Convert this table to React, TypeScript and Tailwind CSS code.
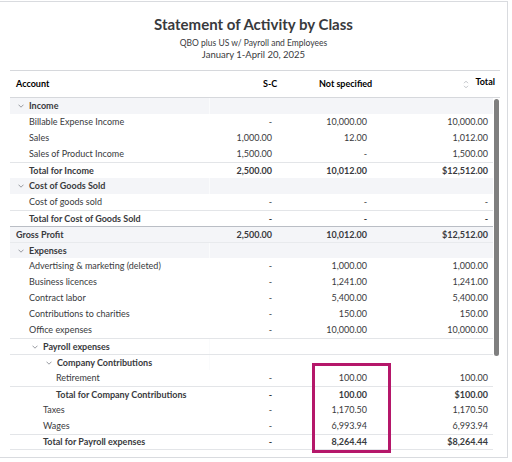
import React from "react";

type Row = {
  label: string;
  pad: string;
  kind: "group" | "item" | "total";
  sc?: string;
  ns?: string;
  total?: string;
  gray?: boolean;
  line?: string;
};

const ROWS: Row[] = [
  { label: "Income", pad: "pl-[8px]", kind: "group", gray: true },
  { label: "Billable Expense Income", pad: "pl-[19px]", kind: "item", sc: "-", ns: "10,000.00", total: "10,000.00" },
  { label: "Sales", pad: "pl-[19px]", kind: "item", sc: "1,000.00", ns: "12.00", total: "1,012.00" },
  { label: "Sales of Product Income", pad: "pl-[19px]", kind: "item", sc: "1,500.00", ns: "-", total: "1,500.00" },
  { label: "Total for Income", pad: "pl-[19px]", kind: "total", sc: "2,500.00", ns: "10,012.00", total: "$12,512.00", line: "border-t border-[#e3e5e8]" },
  { label: "Cost of Goods Sold", pad: "pl-[8px]", kind: "group", gray: true },
  { label: "Cost of goods sold", pad: "pl-[19px]", kind: "item", sc: "-", ns: "-", total: "-" },
  { label: "Total for Cost of Goods Sold", pad: "pl-[19px]", kind: "total", sc: "-", ns: "-", total: "-", line: "border-t border-[#e3e5e8]" },
  { label: "Gross Profit", pad: "pl-[6px]", kind: "total", sc: "2,500.00", ns: "10,012.00", total: "$12,512.00", gray: true, line: "border-t border-[#babec5]" },
  { label: "Expenses", pad: "pl-[8px]", kind: "group", gray: true, line: "border-t border-[#e8eaed]" },
  { label: "Advertising & marketing (deleted)", pad: "pl-[19px]", kind: "item", sc: "-", ns: "1,000.00", total: "1,000.00" },
  { label: "Business licences", pad: "pl-[19px]", kind: "item", sc: "-", ns: "1,241.00", total: "1,241.00" },
  { label: "Contract labor", pad: "pl-[19px]", kind: "item", sc: "-", ns: "5,400.00", total: "5,400.00" },
  { label: "Contributions to charities", pad: "pl-[19px]", kind: "item", sc: "-", ns: "150.00", total: "150.00" },
  { label: "Office expenses", pad: "pl-[19px]", kind: "item", sc: "-", ns: "10,000.00", total: "10,000.00" },
  { label: "Payroll expenses", pad: "pl-[22px]", kind: "group", line: "border-t border-[#e3e5e8]" },
  { label: "Company Contributions", pad: "pl-[36px]", kind: "group", line: "border-t border-[#e3e5e8]" },
  { label: "Retirement", pad: "pl-[46px]", kind: "item", sc: "-", ns: "100.00", total: "100.00" },
  { label: "Total for Company Contributions", pad: "pl-[46px]", kind: "total", sc: "-", ns: "100.00", total: "$100.00", line: "border-t border-[#e3e5e8]" },
  { label: "Taxes", pad: "pl-[33px]", kind: "item", sc: "-", ns: "1,170.50", total: "1,170.50" },
  { label: "Wages", pad: "pl-[33px]", kind: "item", sc: "-", ns: "6,993.94", total: "6,993.94" },
  { label: "Total for Payroll expenses", pad: "pl-[33px]", kind: "total", sc: "-", ns: "8,264.44", total: "$8,264.44", line: "border-y border-[#e3e5e8]" },
];

function Chevron() {
  return (
    <svg width="6" height="4" viewBox="0 0 6 4" className="shrink-0">
      <path d="M0.5 0.7 L3 3.2 L5.5 0.7" fill="none" stroke="#8d9096" strokeWidth="0.9" />
    </svg>
  );
}

function SortIcon() {
  return (
    <svg width="6" height="9" viewBox="0 0 6 9" className="shrink-0">
      <path d="M1 3.2 L3 1.2 L5 3.2" fill="none" stroke="#b9bcc2" strokeWidth="0.9" />
      <path d="M1 5.8 L3 7.8 L5 5.8" fill="none" stroke="#b9bcc2" strokeWidth="0.9" />
    </svg>
  );
}

function ReportRow({ row }: { row: Row }) {
  const bold = row.kind !== "item";
  return (
    <div
      className={`flex h-[16px] items-center ${row.gray ? "bg-[#f4f5f8]" : "bg-white"} ${row.line ?? ""} ${bold ? "font-bold" : ""}`}
    >
      <div className={`flex w-[200px] items-center gap-[5px] h-full ${row.pad} ${row.kind === "group" ? "border-r border-[#fafbfc]" : ""}`}>
        {row.kind === "group" && <Chevron />}
        <span className="whitespace-nowrap">{row.label}</span>
      </div>
      <div className="w-[62px] text-right">{row.sc}</div>
      <div className="w-[95px] text-right">{row.ns}</div>
      <div className="flex-1 pr-[5px] text-right">{row.total}</div>
    </div>
  );
}

export default function App() {
  return (
    <div
      className="relative h-[462px] w-[512px] overflow-hidden bg-white pt-px text-[#393a3d]"
      style={{ fontFamily: "Lato, 'Liberation Sans', sans-serif" }}
    >
      <div className="h-[457px] w-[508px] border-y border-r border-[#d9dbdf]">
        <div className="flex flex-col items-center pt-[12px]">
          <h1 className="text-[15px] font-bold leading-[20px]">Statement of Activity by Class</h1>
          <p className="mt-[3px] text-[8.5px] leading-[12px]">QBO plus US w/ Payroll and Employees</p>
          <p className="text-[9.5px] leading-[12px]">January 1-April 20, 2025</p>
        </div>

        <div className="ml-[10px] mt-[9px] w-[490px] text-[9px]">
          <div className="flex h-[28px] items-center border-y border-[#d6d8dc] font-bold text-black">
            <div className="w-[200px] pl-[6px]">Account</div>
            <div className="w-[62px] pl-[53px] whitespace-nowrap">S-C</div>
            <div className="w-[95px] pl-[47px] whitespace-nowrap">Not specified</div>
            <div className="flex flex-1 items-center justify-end gap-[6px] pr-[5px]">
              <SortIcon />
              <span className="mb-[4px]">Total</span>
            </div>
          </div>

          <div className="flex h-[360px] overflow-hidden">
            <div className="w-[483px]">
              {ROWS.map((row) => (
                <ReportRow key={row.label} row={row} />
              ))}
            </div>
            <div className="flex w-[7px] justify-center pt-px">
              <div className="h-[257px] w-[5px] rounded-full bg-[#7f7f7f]" />
            </div>
          </div>
        </div>
      </div>

      <div className="absolute left-[312px] top-[363px] h-[90px] w-[79px] border-[3px] border-[#b5176a]" />
    </div>
  );
}
